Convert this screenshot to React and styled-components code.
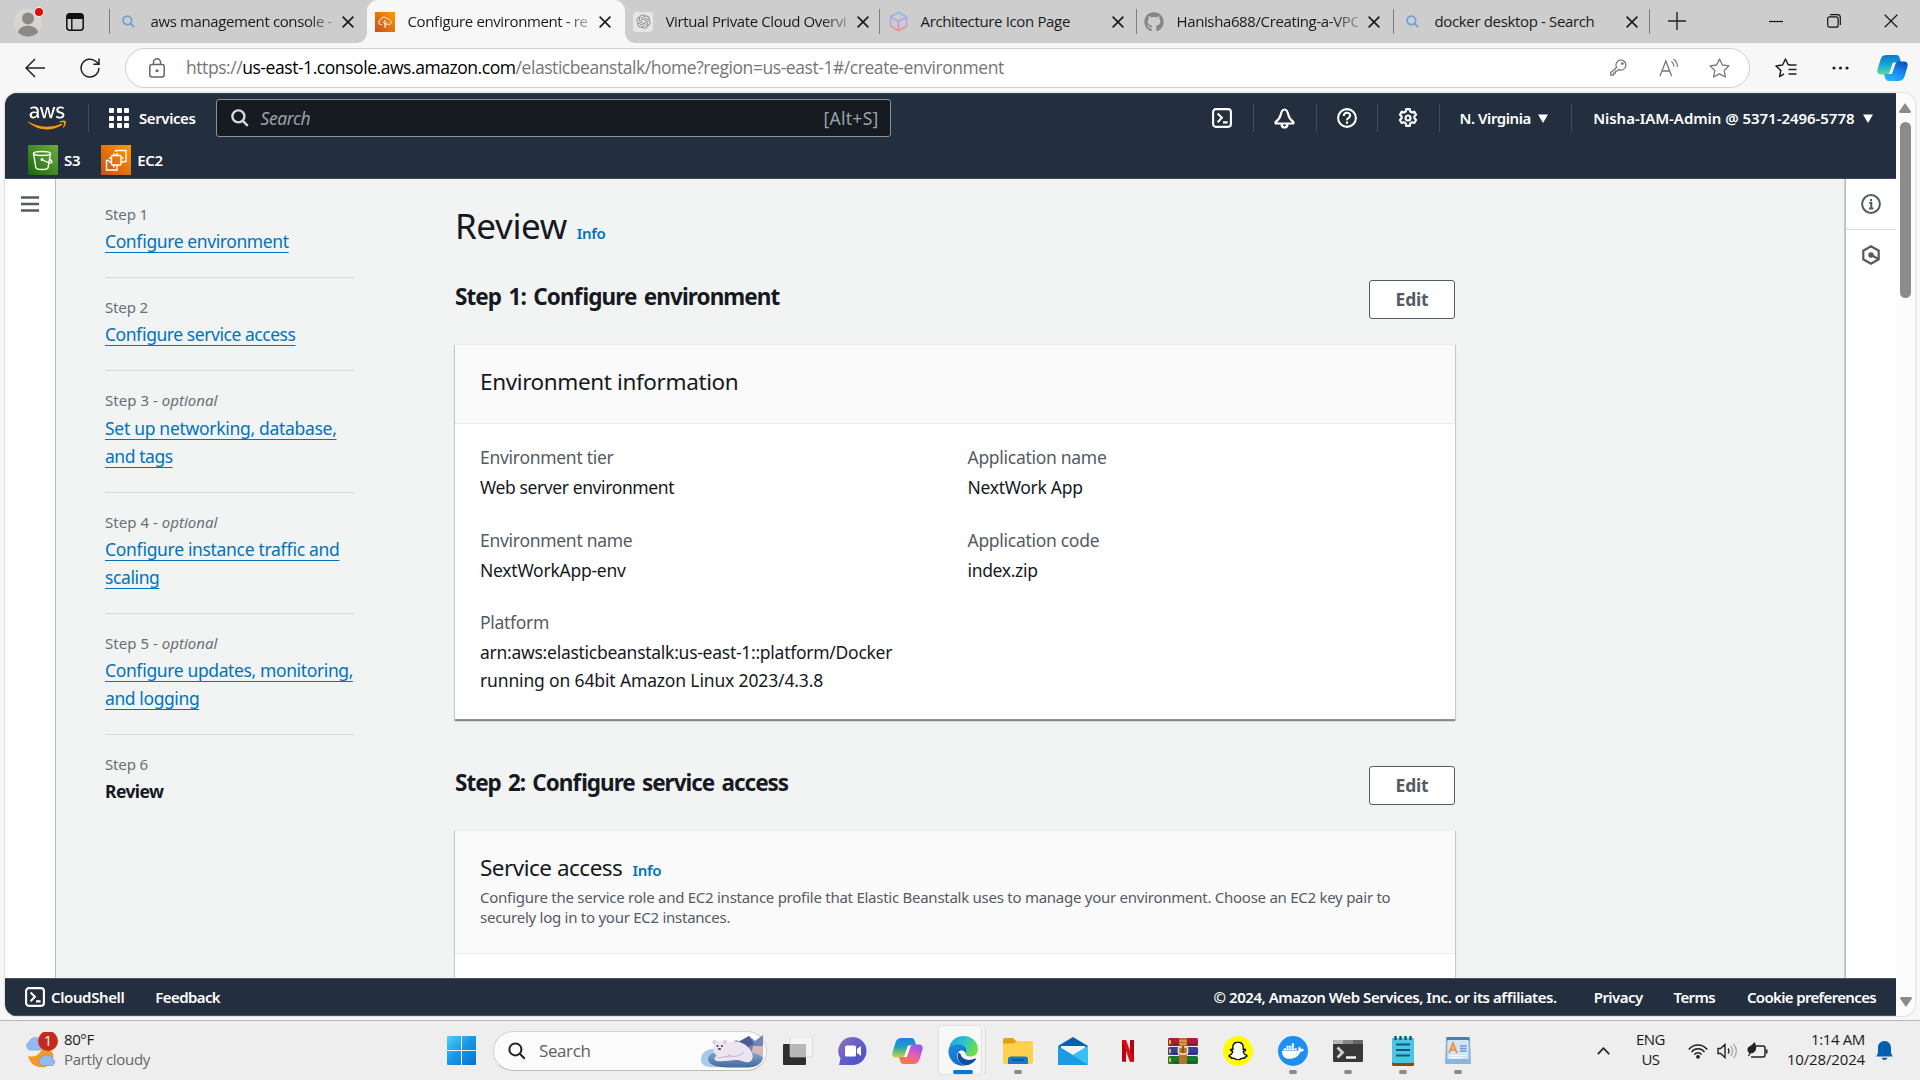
import React from "react";
import styled, { createGlobalStyle, css } from "styled-components";
import { FaAws, FaGithub, FaDocker, FaSnapchatGhost } from "react-icons/fa";
import { RiOpenaiFill } from "react-icons/ri";

const Global = createGlobalStyle`
  * { box-sizing: border-box; }
  html, body { margin: 0; padding: 0; }
  body { width: 1920px; height: 1080px; overflow: hidden; background: #f7f7f7; font-family: "Noto Sans", "Open Sans", sans-serif; font-feature-settings: "liga" 1; }
  svg { display: block; flex: none; }
`;

const ui = `"Open Sans", "Noto Sans", sans-serif`;

const Screen = styled.div`
  width: 1920px; height: 1080px; display: flex; flex-direction: column; overflow: hidden; background: #f7f7f7;
`;

/* ---------- shared text ---------- */
const Text = styled.span`
  white-space: nowrap;
  font-size: ${(p) => p.$size || 15}px;
  font-weight: ${(p) => p.$weight || 400};
  letter-spacing: ${(p) => p.$ls || 0}px;
  word-spacing: ${(p) => p.$ws || 0}px;
  color: ${(p) => p.$color || "inherit"};
  line-height: ${(p) => (p.$lh ? p.$lh + "px" : "normal")};
  ${(p) => p.$italic && css`font-style: italic;`}
`;

/* ---------- tab strip ---------- */
const TabStrip = styled.div`
  height: 43px; flex: none; background: #cdcdcd; display: flex; align-items: stretch; font-family: ${ui};
`;
const StripStart = styled.div`
  width: 109px; padding-left: 14px; display: flex; align-items: center; gap: 21px;
`;
const Tab = styled.div`
  width: ${(p) => p.$w || 256.5}px; padding-left: ${(p) => p.$pl || 8}px; flex: none; display: flex; align-items: center; position: relative;
  ${(p) => p.$active && css`background: #f7f7f7; border-radius: 11px 11px 0 0;
    &::before, &::after { content: ""; position: absolute; bottom: 0; width: 10px; height: 10px; }
    &::before { left: -10px; background: radial-gradient(circle at 0 0, #cdcdcd 9.5px, #f7f7f7 10px); }
    &::after { right: -10px; background: radial-gradient(circle at 100% 0, #cdcdcd 9.5px, #f7f7f7 10px); }
  `}
`;
const Divider = styled.i`
  width: 1px; height: 25px; margin-top: 9px; background: #7d7d7d; flex: none;
`;
const Favicon = styled.div`
  width: 20px; height: 20px; display: flex; align-items: center; justify-content: center; flex: none; border-radius: 4px; background: ${(p) => p.$bg || "none"};
`;
const TabTitle = styled.div`
  width: 181.500px; margin: 0 0 2px 12.500px; white-space: nowrap; font-size: 15px; letter-spacing: ${(p) => p.$ls}px; color: #1b1b1b; line-height: 22px;
  ${(p) => p.$fade && css`-webkit-mask-image: linear-gradient(90deg, #000 156px, transparent 192px);`}
`;
const CloseBox = styled.div`
  margin-left: 10px;
`;
const WindowControls = styled.div`
  display: flex; align-items: center; margin: 0 0 1px 18px; flex: 1;
`;
const Gap = styled.div`
  width: ${(p) => p.$w || 0}px; flex: none;
`;
const Grow = styled.div`flex: 1;`;

/* ---------- toolbar ---------- */
const Toolbar = styled.div`
  height: 50px; flex: none; display: flex; align-items: center; padding: 0 0 1px 25px; font-family: ${ui};
`;
const Omnibox = styled.div`
  width: 1625px; height: 40px; border-radius: 20px; border: 1px solid #cfcfcf; background: #fff; display: flex; align-items: center; margin-left: 25px; padding-left: 23px; color: #767676; padding-right: 19px;
`;
const Url = styled.div`
  margin: 0 0 1px 21px; font-size: 17.5px; letter-spacing: -0.44px; white-space: nowrap; line-height: 24px;
  b { font-weight: 400; color: #000; }
`;

/* ---------- viewport ---------- */
const Viewport = styled.div`
  height: 923px; margin: 0 5px; flex: none; display: flex; border-radius: 12px; overflow: hidden; box-shadow: 0 0 2px rgba(0,0,0,.3);
`;
const Page = styled.div`
  width: 1891px; display: flex; flex-direction: column;
`;
const Scrollbar = styled.div`
  width: 19px; background: #fcfcfc; display: flex; flex-direction: column; align-items: center; padding: 10px 0 9px; justify-content: space-between;
`;
const ScrollTop = styled.div`
  display: flex; flex-direction: column; align-items: center; gap: 9px; margin-right: 1px;
`;
const Thumb = styled.div`
  width: 11px; height: 176px; border-radius: 6px; background: #8b8b8b;
`;

const Nav = styled.header`
  height: 86px; flex: none; background: #232f3e; color: #fff; border-bottom: 1px solid #414b58; border-top: 1px solid #3b4654;
`;
const NavRow = styled.div`
  height: 48px; display: flex; align-items: center; padding-left: 23px;
`;
const NavSep = styled.i`
  width: 1px; height: 28px; background: #414d5c; flex: none;
`;
const SearchBox = styled.div`
  width: 675px; height: 38px; margin-left: 20px; border: 1px solid #879596; border-radius: 3px; background: #161a21; display: flex; align-items: center; padding: 0 11px 0 14px; color: #95a5a6;
`;
const Apps = styled.div`
  display: grid; grid-template-columns: repeat(3, 5px); grid-auto-rows: 5px; gap: 2.5px; margin-left: 20px;
  i { background: #fff; border-radius: 1px; }
`;
const NavCell = styled.div`
  width: ${(p) => p.$w}px; display: flex; align-items: center; justify-content: center; gap: 8px; flex: none;
`;
const FavRow = styled.div`
  height: 36px; display: flex; align-items: center; padding: 0 0 1px 23px;
`;
const ServiceTile = styled.div`
  width: 30px; height: 30px; background: linear-gradient(45deg, ${(p) => p.$from}, ${(p) => p.$to}); flex: none;
`;

const Body = styled.div`
  height: 799px; flex: none; display: flex; background: #f2f3f3; overflow: hidden;
`;
const LeftRail = styled.div`
  width: 51px; background: #fff; border-right: 1px solid #b8bcbc; flex: none; padding: 17px 0 0 16px;
`;
const RightRail = styled.div`
  width: 51px; background: #fff; border-left: 1px solid #b8bcbc; box-shadow: -1px 0 1px rgba(0,28,36,.15); flex: none; display: flex; flex-direction: column; align-items: center;
`;
const RailCell = styled.div`
  width: 100%; height: ${(p) => p.$h}px; display: flex; align-items: center; justify-content: center;
  ${(p) => p.$line && css`border-bottom: 1px solid #d5dbdb;`}
`;
const Steps = styled.nav`
  width: 250px; margin: 21.5px 0 0 49px; flex: none;
`;
const StepItem = styled.div`
  padding: ${(p) => (p.$first ? 0 : 16)}px 0 21.4px; border-bottom: ${(p) => (p.$last ? 0 : 1)}px solid #d5dbdb;
`;
const StepLabel = styled.div`
  font-size: 15px; line-height: 27.5px; color: #687078; letter-spacing: ${(p) => (p.$wide ? 0.03 : -0.15)}px; white-space: nowrap;
`;
const StepLink = styled.div`
  font-size: 17.5px; line-height: 27.6px; color: #0073bb; letter-spacing: ${(p) => p.$ls}px; white-space: nowrap;
  text-decoration: underline 1px; text-underline-offset: 4px; text-decoration-skip-ink: none;
`;
const StepCurrent = styled.div`
  font-size: 17.5px; line-height: 27.5px; font-weight: 700; color: #16191f; letter-spacing: -0.6px;
`;
const Main = styled.main`
  width: 1000px; margin-left: 100px; flex: none;
`;
const TitleRow = styled.div`
  height: 68px; margin-top: 13px; display: flex; align-items: baseline; color: #16191f;
`;
const SectionHead = styled.div`
  display: flex; justify-content: space-between; height: 84px; padding-top: 20px; color: #16191f; margin-top: ${(p) => p.$mt || 0}px;
`;
const Button = styled.button`
  width: 86px; height: 39px; border: 1px solid #545b64; border-radius: 3px; background: #fff; color: #545b64; font: 700 17.5px "Noto Sans", sans-serif; letter-spacing: -0.2px; padding: 0 0 2px;
`;
const Card = styled.section`
  background: #fff; box-shadow: 0 1px 1px 0 rgba(0,28,36,.3), 1px 1px 1px 0 rgba(0,28,36,.15), -1px 1px 1px 0 rgba(0,28,36,.15); border-top: 1px solid #eaeded; border-bottom: 1px solid #879596; height: ${(p) => p.$h}px;
`;
const CardHead = styled.div`
  height: ${(p) => p.$h}px; background: #fafafa; border-bottom: 1px solid #eaeded; padding: 21px 25px 0; color: #16191f;
`;
const CardTitle = styled.div`
  display: flex; align-items: baseline; line-height: 31px;
`;
const Desc = styled.div`
  font-size: 15px; line-height: 20px; color: #545b64; letter-spacing: -0.26px; white-space: nowrap; margin-top: 4px;
`;
const Fields = styled.div`
  display: grid; grid-template-columns: 487.5px 460px; padding: 20px 25px 0; row-gap: 25px;
`;
const FieldName = styled.div`
  font-size: 17.5px; line-height: 27.5px; color: #545b64; letter-spacing: -0.29px;
`;
const FieldValue = styled.div`
  font-size: 17.5px; line-height: 27.5px; color: #16191f; margin-top: 2.5px; white-space: nowrap;
`;
const ValueLine = styled.div`
  letter-spacing: ${(p) => p.$ls}px;
`;
const Footer = styled.footer`
  height: 38px; background: #232f3e; border-top: 1px solid #4a5461; border-bottom: 1px solid #4a5461; color: #fff; display: flex; align-items: center; padding: 0 20px;
`;

/* ---------- taskbar ---------- */
const Taskbar = styled.div`
  height: 60px; margin-top: 4px; border-top: 1px solid #b9b9b9; background: #eeeeee; display: flex; align-items: center; flex: none; font-family: ${ui}; color: #1b1b1b;
`;
const Weather = styled.div`
  width: 447px; padding-left: 23px; display: flex; align-items: center; gap: 6px;
`;
const Column = styled.div`
  display: flex; flex-direction: column; align-items: ${(p) => p.$align || "flex-start"}; padding-bottom: 4px;
`;
const TaskSearch = styled.div`
  width: 274px; height: 40px; margin-left: 17px; border-radius: 20px; background: #fbfbfb; border: 1px solid #d3d3d3; border-bottom-color: #bcbcbc; display: flex; align-items: center; padding: 0 2px 0 14px; flex: none;
`;
const AppSlot = styled.div`
  width: 55px; height: 59px; flex: none; display: flex; flex-direction: column; align-items: center; justify-content: center; position: relative;
`;
const ActiveTile = styled.div`
  position: absolute; left: 3px; top: 4px; width: 44px; height: 50px; border-radius: 5px; background: #f8f8f8; border: 1px solid #dfdfdf; box-shadow: 4px 0 0 -1px #f3f3f3, 5px 0 0 -1px #dcdcdc;
`;
const Dot = styled.i`
  position: absolute; bottom: 6px; width: ${(p) => (p.$on ? 20 : 8)}px; height: 4px; border-radius: 2px; background: ${(p) => (p.$on ? "#0078d4" : "#8a8a8a")};
`;
const AppIcon = styled.div`position: relative;`;
const Tray = styled.div`
  display: flex; align-items: center; margin-left: auto; width: 323px;
`;

/* ---------- icons ---------- */
const Cross = ({ s = 12, w = 1.6 }) => (
  <svg width={s} height={s} viewBox="0 0 12 12"><path d="M.6.6l10.8 10.8M11.4.6L.6 11.4" stroke="#1a1a1a" strokeWidth={w} /></svg>
);
const Lens = ({ s, w, c }) => (
  <svg width={s} height={s} viewBox="0 0 18 18" fill="none" stroke={c} strokeWidth={w}><circle cx="7.4" cy="7.4" r="6" /><path d="M11.8 11.8l5 5" /></svg>
);
const Shell = () => (
  <svg width="20" height="20" viewBox="0 0 20 20" fill="none" stroke="#fff" strokeWidth="2.1"><rect x="1.1" y="1.1" width="17.8" height="17.8" rx="2.8" /><path d="M5.6 5.4l4.3 4.4-4.3 4.4M11 14.4h4.6" /></svg>
);
const Caret = () => <svg width="10" height="9" viewBox="0 0 10 9"><path d="M0 .5h10L5 9z" fill="#fff" /></svg>;

const Copilot = ({ id, a, b, c, d }) => (
  <svg width="31" height="28" viewBox="0 0 31 28">
    <defs>
      <linearGradient id={id + "a"} x1="0" y1="0" x2="0" y2="1"><stop offset="0" stopColor={a[0]} /><stop offset=".45" stopColor={a[1]} /><stop offset="1" stopColor={b} /></linearGradient>
      <linearGradient id={id + "b"} x1=".8" y1="0" x2=".3" y2="1"><stop offset="0" stopColor={c[0]} /><stop offset=".45" stopColor={c[1]} /><stop offset="1" stopColor={d} /></linearGradient>
    </defs>
    <path d="M10 1h9c2.800 0 3.600 2 4.300 4.500L24 8h-4.500c-1.800 0-2.500 1-3 2.600L14 18c-.6 1.600-1.400 2.500-3.400 2.500H4c-3 0-4.200-2.200-3.500-5L3.500 5.500C4.500 2.300 6.500 1 10 1z" fill={`url(#${id}a)`} />
    <path d="M21 27h-9c-2.800 0-3.600-2-4.300-4.500L7 20h3.500c2.500 0 3.200-1 3.700-2.600L17 9.800C17.600 8 18.400 7.500 20.400 7.500H27c3 0 4.200 2.200 3.500 5l-3 10C26.500 25.700 24.500 27 21 27z" fill={`url(#${id}b)`} />
    <path d="M16.800 8.500h3.400c-1 .3-1.700 1-2.200 2.500l-2.600 7.500c-.4 1-.9 1.500-1.800 1.500h-2.800c1 0 1.600-.8 2-2l2.300-7.300c.3-1 .9-1.900 1.700-2.200z" fill="#fff" />
  </svg>
);
const EdgeIcon = () => (
  <svg width="30" height="30" viewBox="0 0 30 30">
    <defs>
      <linearGradient id="e1" x1="0" y1="0" x2="1" y2=".4"><stop offset="0" stopColor="#1e9fe0" /><stop offset=".55" stopColor="#2cc3d0" /><stop offset="1" stopColor="#6be04a" /></linearGradient>
      <linearGradient id="e2" x1="0" y1="0" x2=".6" y2="1"><stop offset="0" stopColor="#1b8fe0" /><stop offset="1" stopColor="#0f6bc4" /></linearGradient>
    </defs>
    <path d="M1 13C2 5 8 0 15.500 0 24 0 30 6 30 13c0 5-3.500 7.500-7.500 7.500-3 0-5-1-5-2.200 0-.9 1.200-1.500 1.200-3.800 0-3-3-5.500-7-5.500C6 9 2 11 1 13z" fill="url(#e1)" />
    <path d="M.4 15C.4 10.500 5 8.500 10 8.500c5.500 0 8.700 3 8.700 6 0 1.500-.5 2.400-1 3-.8-2-2-3-4-3-3 0-4.600 2.500-4.600 5.500 0 4.500 3.500 8.500 8.500 9.600C7 31 .4 23.500.4 15z" fill="url(#e2)" />
    <path d="M10.500 16.500c-2.500 5 .5 12 7.500 12.800 4.500-.3 8-2.800 10-6 .3-.7-.2-1-.8-.7-7 3.200-13.700.4-14.600-4.600z" fill="#0c4fa0" />
  </svg>
);
const FolderIcon = () => (
  <svg width="30" height="26" viewBox="0 0 30 26"><path d="M0 2a2 2 0 012-2h8l3 3v3H0z" fill="#e0a010" /><path d="M0 5.500h11L14 3h14.500A1.500 1.500 0 0130 4.500V24a2 2 0 01-2 2H2a2 2 0 01-2-2z" fill="#ffd04c" /><path d="M5 26v-4.500a3 3 0 013-3h14a3 3 0 013 3V26z" fill="#1979c4" /><path d="M9 22h12" stroke="#0b4f8a" strokeWidth="1.400" /></svg>
);
const MailIcon = () => (
  <svg width="30" height="28" viewBox="0 0 30 28"><path d="M0 9L15 0l15 9v4H0z" fill="#0a5fae" /><path d="M3 9h24v8H3z" fill="#f4f4f4" /><path d="M0 9l15 9 15-9v19H0z" fill="#2fb3ee" /><path d="M0 28V9l30 19z" fill="#1c9ae2" /><path d="M15 18L30 9v19z" fill="#38c0f4" /></svg>
);
const ChatIcon = () => (
  <svg width="29" height="30" viewBox="0 0 29 30"><defs><linearGradient id="ch" x1="0" y1="0" x2="1" y2="1"><stop offset="0" stopColor="#9a6fc0" /><stop offset=".5" stopColor="#5f5fc8" /><stop offset="1" stopColor="#4a50c0" /></linearGradient></defs><path d="M14.500 1a14 14 0 110 28H1l1.500-6.500A14 14 0 0114.500 1z" fill="url(#ch)" /><rect x="7" y="9.500" width="11" height="11" rx="1.500" fill="#fff" /><path d="M19 13l4-3v10l-4-3z" fill="#fff" /></svg>
);
const TaskViewIcon = () => (
  <svg width="30" height="28" viewBox="0 0 30 28"><rect y="7" width="23" height="21" rx="1" fill="#2e2e2e" /><rect x="7" width="22.500" height="20" rx="1" fill="#f4f4f4" stroke="#d4d4d4" strokeWidth=".6" /><path d="M7 7h16v13H7z" fill="#b8b8b8" /></svg>
);
const NetflixIcon = () => (
  <svg width="12" height="22" viewBox="0 0 12 22"><path d="M0 0h4v22l-4-.4zM8 0h4v21.600L8 22z" fill="#b1060f" /><path d="M0 0h4l8 21.600L8 22z" fill="#e50914" /></svg>
);
const RarIcon = () => (
  <svg width="30" height="26" viewBox="0 0 30 26"><rect y="0" width="30" height="8" rx="1.500" fill="#a8203c" /><rect y="9" width="30" height="8" rx="1.500" fill="#3a3ca0" /><rect y="18" width="30" height="8" rx="1.500" fill="#157a30" /><path d="M2 2v4M2 11v4M2 20v4" stroke="#e8b820" strokeWidth="2" /><path d="M5 6.500h24M5 15.500h24M5 24.500h24" stroke="#111" strokeOpacity=".35" strokeWidth="1.500" /><rect x="11" y="0" width="8" height="26" fill="#b8722a" /><path d="M11.500 3h7M11.500 6h7" stroke="#f0c060" /><rect x="10.500" y="9" width="9" height="7" rx="1" fill="none" stroke="#f2e6c8" strokeWidth="1.600" /><path d="M15 8v7" stroke="#8a5a1a" strokeWidth="2" /></svg>
);
const SnapIcon = () => (
  <svg width="30" height="30" viewBox="0 0 30 30"><circle cx="15" cy="15" r="15" fill="#fffc00" /><g transform="translate(5.500 5.500)"><FaSnapchatGhost size={19} color="#fff" stroke="#000" strokeWidth="36" /></g></svg>
);
const DockerIcon = () => (
  <svg width="30" height="30" viewBox="0 0 30 30"><circle cx="15" cy="15" r="15" fill="#1d8fee" /><g transform="translate(4 4)"><FaDocker size={22} color="#fff" /></g></svg>
);
const TerminalIcon = () => (
  <svg width="30" height="22" viewBox="0 0 30 22"><rect width="30" height="22" rx="1.500" fill="#383838" /><path d="M0 1.500A1.500 1.500 0 011.500 0H10v4H0z" fill="#b8b8b8" /><path d="M10 0h10v4H10z" fill="#888" /><path d="M20 0h8.500A1.500 1.500 0 0130 1.500V4H20z" fill="#666" /><path d="M4.500 7.500l5 5-5 5" stroke="#d0d0d0" strokeWidth="2.800" fill="none" /><path d="M13 17.500h10" stroke="#fff" strokeWidth="2.400" /></svg>
);
const NotepadIcon = () => (
  <svg width="22" height="30" viewBox="0 0 22 30"><rect y="2" width="22" height="28" rx="1.500" fill="#8a4a10" /><rect y="2" width="22" height="25" rx="1.500" fill="#4cc4e4" /><path d="M4 9h14M4 14.500h14M4 20h14" stroke="#0b5a78" strokeWidth="2.200" transform="translate(0 -.5)" /><path d="M3.500 0v4M8.500 0v4M13.500 0v4M18.500 0v4" stroke="#0b5a78" strokeWidth="2.400" /></svg>
);
const WordpadIcon = () => (
  <svg width="26" height="28" viewBox="0 0 26 28"><path d="M1 1h24l1 26H0z" fill="#8db4dc" /><path d="M1.500 0h23v4h-23z" fill="#4b7fae" /><path d="M2.500 3h21v19H2.500z" fill="#d3e4f6" /><path d="M4 16L8 6.500l4 9.500M5.500 12.800h5" stroke="#f0903c" strokeWidth="1.900" fill="none" /><path d="M15 9h6.500M15 11.500h6.500M15 14h6.500" stroke="#6d94c8" strokeWidth="1.300" /><path d="M4 18.500h17M4 20.800h13" stroke="#f4f9ff" strokeWidth="1.200" /></svg>
);
const BearArt = () => (
  <svg width="64" height="34" viewBox="0 0 64 34">
    <defs><linearGradient id="bw" x1="0" y1="0" x2="0" y2="1"><stop offset="0" stopColor="#8fb0d4" /><stop offset="1" stopColor="#41689c" /></linearGradient></defs>
    <path d="M30 12l6-6 5 3 8-7 6 5 8-6v24l-10 4z" fill="#7484b4" />
    <path d="M38 8l11-6 5 8-8 4z" fill="#4c5c94" /><path d="M53 12h10v12q-2 9-14 8z" fill="#d8b8b4" />
    <path d="M1 26C1 18 8 14 16 15l-6 7 8 11C8 34 1 32 1 26z" fill="#a9cbe8" />
    <path d="M8 25c0-7 14-10 28-9s24 4 27 8q-3 9-14 9.500H28C16 33.500 8 30 8 25z" fill="url(#bw)" />
    <path d="M14 10c0-4 10-4 12 0 8-5 20-2 25 7 3 5 2 10-2 11-5 1-8-2-12-2-7 0-14 2-20 1-4-1-3-4 0-5-4-3-4-8-3-12z" fill="#ece4ee" />
    <circle cx="14.500" cy="8" r="2.200" fill="#ddd0e2" /><circle cx="25" cy="8" r="2.200" fill="#ddd0e2" /><circle cx="17.500" cy="12" r=".9" fill="#333" /><circle cx="22" cy="12" r=".9" fill="#333" /><ellipse cx="19.500" cy="15" rx="1.600" ry="1.100" fill="#444" />
    <path d="M28 21c6 3 12 1 16-3M18 24c6-1 8-2 12-1" stroke="#bfb0cc" fill="none" />
  </svg>
);
const WindowsLogo = () => (
  <svg width="29" height="29" viewBox="0 0 29 29"><defs><linearGradient id="wl" gradientUnits="userSpaceOnUse" x1="0" y1="0" x2="29" y2="29"><stop offset="0" stopColor="#4fd0fb" /><stop offset=".5" stopColor="#1596e4" /><stop offset="1" stopColor="#0a70cf" /></linearGradient></defs><path d="M1 0h13v14H0V1a1 1 0 011-1zM15 0h13a1 1 0 011 1v13H15zM0 15h14v14H1a1 1 0 01-1-1zM15 15h14v13a1 1 0 01-1 1H15z" fill="url(#wl)" /></svg>
);
const WeatherIcon = () => (
  <svg width="35" height="38" viewBox="0 0 35 38">
    <path d="M5 24c7 2 13-2 14-8 8-1 13 5 11 11-2 8-9 9-14 8S7 31 5 24z" fill="#f29a22" />
    <path d="M6.500 18a4.600 4.600 0 010-8.500 6 6 0 0110-2l2 10.500z" fill="#94b8f2" stroke="#7ba2e2" strokeWidth=".7" />
    <path d="M19 33.500a4.400 4.400 0 01.6-8.500 6 6 0 0110 1.500 4 4 0 010 7z" fill="#94b8f2" stroke="#6f98dc" strokeWidth=".7" />
    <circle cx="25" cy="9" r="10" fill="#c42b1c" />
    <text x="25" y="14" fill="#fff" fontSize="14" textAnchor="middle" fontFamily="Open Sans, sans-serif">1</text>
  </svg>
);
const BeanstalkIcon = () => (
  <svg width="20" height="20" viewBox="0 0 20 20"><defs><linearGradient id="bs" x1="0" y1="1" x2="1" y2="0"><stop offset="0" stopColor="#c8511b" /><stop offset="1" stopColor="#ff9900" /></linearGradient></defs><rect width="20" height="20" fill="url(#bs)" /><path d="M7 12.500H5.500a2.300 2.300 0 010-4.500C6 5 10 4 11.500 6.500c2-.6 3 .5 3 1.800 2.500.6 2 4.200-.5 4.200h-1.500M10 8v8M10 12L7.800 9.800M10 14l2.500-3.500" stroke="#fff" fill="none" strokeWidth="1" /></svg>
);
const CubeIcon = () => (
  <svg width="19" height="21" viewBox="0 0 19 21"><defs><linearGradient id="cb" x1="0" y1="0" x2="0" y2="1"><stop offset="0" stopColor="#7fc4e0" /><stop offset=".5" stopColor="#c0a0e8" /><stop offset="1" stopColor="#f09090" /></linearGradient></defs><path d="M9.500 1.200l8 4.500v9.400l-8 4.600-8-4.600V5.700zM1.500 5.700l8 4.700 8-4.700M9.500 10.400v9.300" stroke="url(#cb)" strokeWidth="1.800" fill="none" strokeLinejoin="round" /></svg>
);

const tabs = [
  { title: "aws management console -", icon: <Lens s={13} w={2.4} c="#6fa0d0" />, w: 257, pl: 8, fade: true, ls: -0.38 },
  { title: "Configure environment - re", icon: <BeanstalkIcon />, w: 258, pl: 8, active: true, fade: true, ls: -0.38 },
  { title: "Virtual Private Cloud Overvi", icon: <RiOpenaiFill size={17} color="#8b8b8b" />, bg: "#e6e6e6", w: 254, pl: 8, fade: true, ls: -0.38 },
  { title: "Architecture Icon Page", icon: <CubeIcon />, w: 256, pl: 8, line: true, ls: -0.35 },
  { title: "Hanisha688/Creating-a-VPC", icon: <FaGithub size={20} color="#868686" />, w: 256, pl: 7, line: true, fade: true, ls: -0.38 },
  { title: "docker desktop - Search", icon: <Lens s={13} w={2.4} c="#6fa0d0" />, w: 255, pl: 8, line: true, ls: -0.35 },
];

const steps = [
  { label: "Step 1", lines: [["Configure environment", -0.4]] },
  { label: "Step 2", lines: [["Configure service access", -0.45]] },
  { label: "Step 3", optional: true, lines: [["Set up networking, database,", -0.3], ["and tags", -0.45]] },
  { label: "Step 4", optional: true, lines: [["Configure instance traffic and", -0.33], ["scaling", -0.4]] },
  { label: "Step 5", optional: true, lines: [["Configure updates, monitoring,", -0.38], ["and logging", -0.4]] },
];

const fields = [
  { name: "Environment tier", lines: [["Web server environment", -0.4]] },
  { name: "Application name", lines: [["NextWork App", -0.3]] },
  { name: "Environment name", lines: [["NextWorkApp-env", -0.25]] },
  { name: "Application code", lines: [["index.zip", -0.33]] },
  { name: "Platform", lines: [["arn:aws:elasticbeanstalk:us-east-1::platform/Docker", -0.27], ["running on 64bit Amazon Linux 2023/4.3.8", -0.15]] },
];

const apps = [
  { icon: <TaskViewIcon /> },
  { icon: <ChatIcon /> },
  { icon: <Copilot id="tc" a={["#1a80e8", "#1fa0c0"]} b="#c8d838" c={["#8a58f0", "#e05ac0"]} d="#ff7a38" /> },
  { icon: <EdgeIcon />, active: true },
  { icon: <FolderIcon />, dot: true },
  { icon: <MailIcon /> },
  { icon: <NetflixIcon /> },
  { icon: <RarIcon /> },
  { icon: <SnapIcon /> },
  { icon: <DockerIcon />, dot: true },
  { icon: <TerminalIcon />, dot: true },
  { icon: <NotepadIcon />, dot: true },
  { icon: <WordpadIcon />, dot: true },
];

const Avatar = () => (
  <svg width="31" height="32" viewBox="0 0 31 32"><circle cx="14" cy="16.500" r="14" fill="#d8d6d2" /><circle cx="14" cy="12.500" r="6" fill="#8c8985" /><path d="M4 26.500c1-9 19-9 20 0-5 5.500-15 5.500-20 0z" fill="#8c8985" /><circle cx="25" cy="6" r="5" fill="#eee" /><circle cx="25" cy="6" r="4" fill="#e80a0a" /></svg>
);

export default function App() {
  return (
    <Screen>
      <Global />
      <TabStrip>
        <StripStart>
          <Avatar />
          <svg width="18" height="18" viewBox="0 0 18 18"><rect x=".8" y=".8" width="16.400" height="16.400" rx="3" fill="none" stroke="#111" strokeWidth="1.500" /><path d="M1 3a2.500 2.500 0 012.500-2.500h11A2.500 2.500 0 0117 3v3H1z" fill="#111" /><path d="M5.800 6v11" stroke="#111" strokeWidth="1.400" /></svg>
        </StripStart>
        <Divider />
        {tabs.map((t) => (
          <React.Fragment key={t.title}>
            {t.line && <Divider />}
            <Tab $w={t.w} $pl={t.pl} $active={t.active}>
              <Favicon $bg={t.bg}>{t.icon}</Favicon>
              <TabTitle $fade={t.fade} $ls={t.ls}>{t.title}</TabTitle>
              <CloseBox><Cross /></CloseBox>
            </Tab>
          </React.Fragment>
        ))}
        <Divider />
        <WindowControls>
          <svg width="18" height="18" viewBox="0 0 18 18"><path d="M9 0v18M0 9h18" stroke="#222" strokeWidth="1.400" /></svg>
          <Gap $w={83} />
          <svg width="14" height="14" viewBox="0 0 14 14"><path d="M0 7.500h14" stroke="#111" strokeWidth="1.200" /></svg>
          <Gap $w={44} />
          <svg width="14" height="14" viewBox="0 0 14 14" fill="none" stroke="#111" strokeWidth="1.200"><rect x=".7" y="2.800" width="10.400" height="10.400" rx="2" /><path d="M3 .7h7.500a2.800 2.800 0 012.800 2.800V11" /></svg>
          <Gap $w={43} />
          <Cross s={14} w={1.1} />
        </WindowControls>
      </TabStrip>

      <Toolbar>
        <svg width="20" height="20" viewBox="0 0 20 20" fill="none" stroke="#222" strokeWidth="1.500"><path d="M10 1L1 10l9 9M1 10h19" /></svg>
        <Gap $w={35} />
        <svg width="20" height="20" viewBox="0 0 20 20" fill="none" stroke="#222" strokeWidth="1.500"><path d="M18.900 10A8.900 8.900 0 1116 3.500L18.800 6M19 .5V6.200h-5.700" /></svg>
        <Omnibox>
          <svg width="16" height="20" viewBox="0 0 16 20" fill="none" stroke="#666" strokeWidth="1.500"><rect x=".8" y="6.500" width="14.400" height="12.500" rx="2.200" /><path d="M4.500 6.500V4.200a3.500 3.500 0 017 0v2.300" /><circle cx="8" cy="12.800" r=".8" fill="#666" /></svg>
          <Url>https://<b>us-east-1.console.aws.amazon.com</b>/elasticbeanstalk/home?region=us-east-1#/create-environment</Url>
          <Grow />
          <svg width="17" height="17" viewBox="0 0 17 17" fill="none" stroke="#777" strokeWidth="1.300"><path d="M6.500 8.500a5 5 0 112.200 2.100L7 12.200H5.400v2H3.500v2H.8v-2.600z" /><circle cx="12.300" cy="4.600" r=".8" /></svg>
          <Gap $w={32} />
          <svg width="20" height="19" viewBox="0 0 20 19" fill="none" stroke="#777" strokeWidth="1.300"><path d="M1 18L6.800 3 12.600 18M3 13h7.600M12.500 3.500a6 6 0 012.500 5M14.500 1a10 10 0 014 8" /></svg>
          <Gap $w={30} />
          <svg width="21" height="20" viewBox="0 0 21 20" fill="none" stroke="#777" strokeWidth="1.300" strokeLinejoin="round"><path d="M10.500 1l2.900 6 6.600.9-4.800 4.600 1.200 6.500-5.900-3.100L4.600 19l1.200-6.500L1 7.900 7.600 7z" /></svg>
        </Omnibox>
        <Gap $w={25} />
        <svg width="22" height="20" viewBox="0 0 22 20" fill="none" stroke="#222" strokeWidth="1.500" strokeLinejoin="round"><path d="M9 15.800L4.600 18.600l1.200-6L1 7.900 7.600 7l2.900-6 2.700 5.800h1.600M14 7h7.500M13.500 11.500h8M13.500 16h8" /></svg>
        <Gap $w={35} />
        <svg width="17" height="4" viewBox="0 0 17 4" fill="#222"><circle cx="2" cy="2" r="1.600" /><circle cx="8.500" cy="2" r="1.600" /><circle cx="15" cy="2" r="1.600" /></svg>
        <Gap $w={28} />
        <Copilot id="ec" a={["#0f78c8", "#12a0d8"]} b="#5cdca0" c={["#0c50b8", "#1a80f0"]} d="#20b8f8" />
      </Toolbar>

      <Viewport>
        <Page>
          <Nav>
            <NavRow>
              <svg width="0" height="0"><defs><linearGradient id="aws" gradientUnits="userSpaceOnUse" x1="0" y1="0" x2="0" y2="512"><stop offset=".615" stopColor="#fff" /><stop offset=".615" stopColor="#ff9900" /></linearGradient></defs></svg>
              <FaAws size={38} fill="url(#aws)" />
              <Gap $w={22} />
              <NavSep />
              <Apps>{Array.from({ length: 9 }, (_, i) => <i key={i} />)}</Apps>
              <Gap $w={10} />
              <Text $size={15} $weight={600} $ls={-0.4}>Services</Text>
              <SearchBox>
                <Lens s={18} w={2.4} c="#d5dbdb" />
                <Gap $w={12} />
                <Text $size={17.5} $italic $ls={-0.4}>Search</Text>
                <Grow />
                <Text $size={17.5} $ls={0.25}>[Alt+S]</Text>
              </SearchBox>
              <Gap $w={301} />
              <NavCell $w={61}><Shell /></NavCell>
              <NavSep />
              <NavCell $w={62}>
                <svg width="21" height="21" viewBox="0 0 21 21" fill="none" stroke="#fff" strokeWidth="2.200" strokeLinejoin="round"><path d="M10.500 1.500C8 1.500 7.300 4 6.700 6.800 6 10 4.300 12.200 1.600 14v1.500h17.800V14c-2.700-1.800-4.400-4-5.100-7.200C13.700 4 13 1.500 10.500 1.500zM7.500 16.500c.5 4 5.500 4 6 0" /></svg>
              </NavCell>
              <NavSep />
              <NavCell $w={60}>
                <svg width="20" height="20" viewBox="0 0 20 20" fill="none" stroke="#fff" strokeWidth="2.100"><circle cx="10" cy="10" r="8.900" /><path d="M6.800 8c0-4.200 6.400-4.200 6.400-.4 0 2.400-3.200 2.200-3.200 4.600M10 13.600v2.200" /></svg>
              </NavCell>
              <NavSep />
              <NavCell $w={61}>
                <svg width="20" height="20" viewBox="0 0 20 20" fill="none" stroke="#fff" strokeWidth="2.200" strokeLinejoin="round"><path d="M8.200 1.200h3.600l.5 2.300 1.700 1 2.300-.8 1.800 3-1.700 1.600v2l1.700 1.700-1.800 3-2.300-.7-1.700 1-.5 2.500H8.200l-.5-2.500-1.700-1-2.300.7-1.800-3 1.700-1.700v-2L1.900 6.700l1.800-3L6 4.500l1.700-1z" /><circle cx="10" cy="10" r="2.500" /></svg>
              </NavCell>
              <NavSep />
              <Gap $w={20} />
              <Text $size={15} $weight={600} $ls={-0.45}>N. Virginia</Text>
              <Gap $w={7} /><Caret />
              <Grow />
              <NavSep />
              <Gap $w={21} />
              <Text $size={15} $weight={600} $ls={-0.04}>Nisha-IAM-Admin @ 5371-2496-5778</Text>
              <Gap $w={8} /><Caret />
              <Gap $w={23.5} />
            </NavRow>
            <FavRow>
              <ServiceTile $from="#1b660f" $to="#6cae3e"><svg width="30" height="30" viewBox="0 0 30 30" fill="none" stroke="#fff" strokeWidth="1.400"><ellipse cx="14" cy="8.500" rx="8.500" ry="2" /><path d="M5.500 8.500L8 23c1 2 11 2 12 0l2.500-14.500M14 14.500c5 3 10 4.500 10 2.500s-2-2.500-3-3" /><circle cx="14" cy="14.500" r=".8" /></svg></ServiceTile>
              <Gap $w={6} /><Text $size={15} $weight={600} $ls={-0.3}>S3</Text>
              <Gap $w={21} />
              <ServiceTile $from="#c8511b" $to="#ff9900"><svg width="30" height="30" viewBox="0 0 30 30" fill="none" stroke="#fff" strokeWidth="1.400"><rect x="10.500" y="10.500" width="9.500" height="9.500" rx="1" /><path d="M13 8v2.500M16 8v2.500M13 20v2.500M16 20v2.500M8 13h2.500M8 17h2.500M20 13h2.500M20 17h2.500M14.500 7V5.500H25v11h-2.500M8.500 15.500h-3V25H16v-2.500" /></svg></ServiceTile>
              <Gap $w={6} /><Text $size={15} $weight={600} $ls={-0.3}>EC2</Text>
            </FavRow>
          </Nav>

          <Body>
            <LeftRail>
              <svg width="18" height="17" viewBox="0 0 18 17"><path d="M0 1.500h18M0 8h18M0 14.500h18" stroke="#545b64" strokeWidth="2.400" /></svg>
            </LeftRail>
            <Steps>
              {steps.map((s, i) => (
                <StepItem key={s.label} $first={i === 0}>
                  <StepLabel $wide={s.optional}>{s.label}{s.optional && <> - <em>optional</em></>}</StepLabel>
                  {s.lines.map(([l, ls]) => <StepLink key={l} $ls={ls}>{l}</StepLink>)}
                </StepItem>
              ))}
              <StepItem $last>
                <StepLabel>Step 6</StepLabel>
                <StepCurrent>Review</StepCurrent>
              </StepItem>
            </Steps>
            <Main>
              <TitleRow>
                <Text $size={35} $lh={68} $ls={-0.4}>Review</Text>
                <Gap $w={10} />
                <Text $size={15} $weight={600} $color="#0073bb" $ls={-0.3}>Info</Text>
              </TitleRow>
              <SectionHead>
                <Text $size={22.5} $weight={700} $lh={34} $ls={-0.92} $ws={2.5}>Step 1: Configure environment</Text>
                <Button>Edit</Button>
              </SectionHead>
              <Card $h={376}>
                <CardHead $h={79}><CardTitle><Text $size={22.5} $ls={-0.38}>Environment information</Text></CardTitle></CardHead>
                <Fields>
                  {fields.map((f) => (
                    <div key={f.name}>
                      <FieldName>{f.name}</FieldName>
                      <FieldValue>{f.lines.map(([l, ls]) => <ValueLine key={l} $ls={ls}>{l}</ValueLine>)}</FieldValue>
                    </div>
                  ))}
                </Fields>
              </Card>
              <SectionHead $mt={26}>
                <Text $size={22.5} $weight={700} $lh={34} $ls={-1} $ws={2.3}>Step 2: Configure service access</Text>
                <Button>Edit</Button>
              </SectionHead>
              <Card $h={300}>
                <CardHead $h={123}>
                  <CardTitle>
                    <Text $size={22.5} $ls={-0.5}>Service access</Text><Gap $w={10} />
                    <Text $size={15} $weight={600} $color="#0073bb" $ls={-0.3}>Info</Text>
                  </CardTitle>
                  <Desc>Configure the service role and EC2 instance profile that Elastic Beanstalk uses to manage your environment. Choose an EC2 key pair to<br />securely log in to your EC2 instances.</Desc>
                </CardHead>
              </Card>
            </Main>
            <Grow />
            <RightRail>
              <RailCell $h={51} $line>
                <svg width="20" height="20" viewBox="0 0 20 20" fill="none" stroke="#545b64" strokeWidth="2"><circle cx="10" cy="10" r="8.900" /><path d="M8.300 9h2v6M8 14.500h4.500M10 5v2.200" /></svg>
              </RailCell>
              <RailCell $h={50}>
                <svg width="18" height="20" viewBox="0 0 18 20" fill="none" stroke="#545b64" strokeWidth="2.200"><path d="M9 1.300l7.700 4.400v8.600L9 18.700l-7.700-4.400V5.700z" /><circle cx="9" cy="10" r="1.600" fill="#545b64" /><path d="M9 10l7.500 4" /></svg>
              </RailCell>
            </RightRail>
          </Body>

          <Footer>
            <Shell /><Gap $w={6} />
            <Text $size={15} $weight={600} $ls={-0.38}>CloudShell</Text><Gap $w={31} />
            <Text $size={15} $weight={600} $ls={-0.6}>Feedback</Text>
            <Grow />
            <Text $size={15} $weight={600} $ls={-0.45}>© 2024, Amazon Web Services, Inc. or its affiliates.</Text><Gap $w={37} />
            <Text $size={15} $weight={600} $ls={-0.55}>Privacy</Text><Gap $w={31} />
            <Text $size={15} $weight={600} $ls={-0.65}>Terms</Text><Gap $w={32} />
            <Text $size={15} $weight={600} $ls={-0.65}>Cookie preferences</Text>
          </Footer>
        </Page>
        <Scrollbar>
          <ScrollTop>
            <svg width="12" height="10" viewBox="0 0 12 10"><path d="M6 0l6 8.500q0 1.500-1.500 1.500h-9Q0 10 0 8.500z" fill="#8b8b8b" /></svg>
            <Thumb />
          </ScrollTop>
          <svg width="12" height="10" viewBox="0 0 12 10"><path d="M6 10l6-8.500Q12 0 10.500 0h-9Q0 0 0 1.500z" fill="#8b8b8b" /></svg>
        </Scrollbar>
      </Viewport>

      <Taskbar>
        <Weather>
          <WeatherIcon />
          <Column><Text $size={15} $ls={-0.4} $lh={20}>80°F</Text><Text $size={15} $ls={-0.3} $lh={20} $color="#666">Partly cloudy</Text></Column>
        </Weather>
        <WindowsLogo />
        <TaskSearch>
          <Lens s={18} w={2} c="#222" /><Gap $w={13} />
          <Text $size={17} $ls={-0.4} $color="#606060">Search</Text>
          <Grow />
          <BearArt />
        </TaskSearch>
        <Gap $w={3} />
        {apps.map((a, i) => (
          <AppSlot key={i}>
            {a.active && <ActiveTile />}
            <AppIcon>{a.icon}</AppIcon>
            {(a.dot || a.active) && <Dot $on={a.active} />}
          </AppSlot>
        ))}
        <Tray>
          <svg width="13" height="8" viewBox="0 0 13 8"><path d="M.8 7.200L6.500 1.200l5.700 6" stroke="#222" strokeWidth="1.700" fill="none" /></svg>
          <Gap $w={26} />
          <Column $align="center"><Text $size={15} $lh={20} $ls={-0.6}>ENG</Text><Text $size={15} $lh={20} $ls={-0.6}>US</Text></Column>
          <Gap $w={23} />
          <svg width="20" height="16" viewBox="0 0 20 16" fill="none" stroke="#222" strokeWidth="1.400"><path d="M.7 6.500c5-6 13.600-6 18.600 0M3.500 9c3.500-4.300 9.500-4.300 13 0M6.300 11.600c2-2.500 5.400-2.500 7.400 0" /><circle cx="10" cy="13.800" r="1.200" fill="#222" /></svg>
          <Gap $w={9} />
          <svg width="21" height="16" viewBox="0 0 21 16" fill="none" stroke="#222" strokeWidth="1.400"><path d="M1 5.500h2.500L8 1.500v13l-4.500-4H1zM11 5.500a4 4 0 010 5" /><path d="M13.500 3a7 7 0 010 10M16.500 1a10 10 0 010 14" stroke="#aaa" /></svg>
          <Gap $w={9} />
          <svg width="21" height="17" viewBox="0 0 21 17"><path d="M9 4h7a2 2 0 012 2v7a2 2 0 01-2 2H4" fill="none" stroke="#222" strokeWidth="1.500" /><path d="M19 7.500h1.500v4H19z" fill="#222" /><path d="M7.500 0C10 4 10 9 6 11c-4 1-6-1-5.500-4S5 4 7.500 0z" fill="#222" /><path d="M1.500 14L6 6" stroke="#222" strokeWidth="1.200" /></svg>
          <Grow />
          <Column $align="flex-end"><Text $size={15} $lh={20} $ls={-0.35}>1:14 AM</Text><Text $size={15} $lh={20} $ls={-0.15}>10/28/2024</Text></Column>
          <Gap $w={11} />
          <svg width="17" height="20" viewBox="0 0 17 20" fill="#005fb0"><path d="M8.500 0C4.500 0 2 3 2 6.500V12L.3 15.500h16.400L15 12V6.500C15 3 12.500 0 8.500 0zM5.700 16.800c.6 3 5 3 5.600 0z" /></svg>
          <Gap $w={27} />
        </Tray>
      </Taskbar>
    </Screen>
  );
}
